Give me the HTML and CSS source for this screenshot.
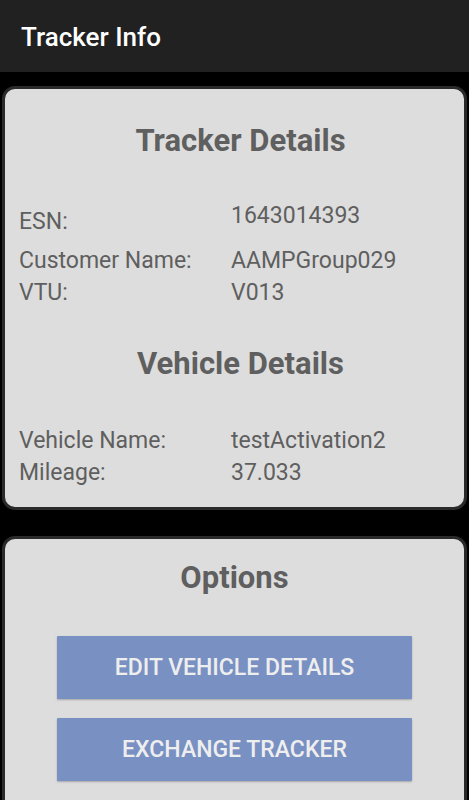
FILE: index.html
```html
<!DOCTYPE html>
<html lang="en">
<head>
    <meta charset="UTF-8">
    <meta name="viewport" content="width=device-width, initial-scale=1.0">
    <title>Tracker Info</title>
    <link rel="stylesheet" href="styles.css">
</head>
<body>
    <!-- Верхняя панель -->
    <div class="appbar">Tracker Info</div>

    <div class="content">
        <!-- Карточка с деталями -->
        <div class="card details">
            <div class="heading">Tracker Details</div>
            <div class="rows">
                <div class="row esn">
                    <div class="label">ESN:</div>
                    <div class="value">1643014393</div>
                </div>
                <div class="row">
                    <div class="label">Customer Name:</div>
                    <div class="value">AAMPGroup029</div>
                </div>
                <div class="row">
                    <div class="label">VTU:</div>
                    <div class="value">V013</div>
                </div>
            </div>

            <div class="heading vehicle">Vehicle Details</div>
            <div class="rows">
                <div class="row">
                    <div class="label">Vehicle Name:</div>
                    <div class="value">testActivation2</div>
                </div>
                <div class="row">
                    <div class="label">Mileage:</div>
                    <div class="value">37.033</div>
                </div>
            </div>
        </div>

        <!-- Опции -->
        <div class="card options">
            <div class="heading">Options</div>
            <button class="btn">Edit Vehicle Details</button>
            <button class="btn">Exchange Tracker</button>
        </div>
    </div>
</body>
</html>
```
FILE: styles.css
```css
/* Основные стили */
body {
    margin: 0;
    padding: 0;
    height: 100vh;
    background-color: #000;
    font-family: Roboto, "Noto Sans", Arial, sans-serif;
    overflow: hidden;
}

/* Верхняя панель */
.appbar {
    height: 72px;
    background-color: #212121;
    color: #fff;
    font-size: 26px;
    font-weight: 500;
    display: flex;
    align-items: center;
    padding-left: 21px;
    padding-top: 2px;
    box-sizing: border-box;
}

.content {
    padding: 14px 2px 0;
    display: flex;
    flex-direction: column;
    gap: 26px;
}

/* Карточки */
.card {
    background-color: #dddddd;
    border: 3px solid #2a2a2a;
    border-radius: 13px;
    color: #5f5f5f;
}

.details {
    height: 424px;
    box-sizing: border-box;
    padding-top: 33px;
}

.heading {
    text-align: center;
    font-size: 31px;
    font-weight: bold;
    line-height: 38px;
}

.details .heading {
    padding-left: 12px;
}

.heading.vehicle {
    margin-top: 36px;
}

.rows {
    padding-left: 14px;
    padding-top: 2px;
    font-size: 23px;
}

.row {
    display: grid;
    grid-template-columns: 212px 1fr;
    line-height: 32px;
}

.esn {
    margin-top: 44px;
    margin-bottom: 7px;
}

.esn .value {
    position: relative;
    top: -6px;
}

.heading.vehicle + .rows {
    margin-top: 40px;
}

/* Кнопки */
.options {
    height: 300px;
    padding-top: 20px;
    display: flex;
    flex-direction: column;
    align-items: center;
}

.options .heading {
    margin-bottom: 39px;
}

.btn {
    width: 355px;
    height: 63px;
    margin-bottom: 19px;
    background-color: #7990c2;
    color: #eeeeee;
    border: none;
    border-radius: 1px;
    box-shadow: 0 1px 2px rgba(0, 0, 0, 0.25);
    font-family: inherit;
    font-size: 23px;
    font-weight: 500;
    text-transform: uppercase;
}
```
